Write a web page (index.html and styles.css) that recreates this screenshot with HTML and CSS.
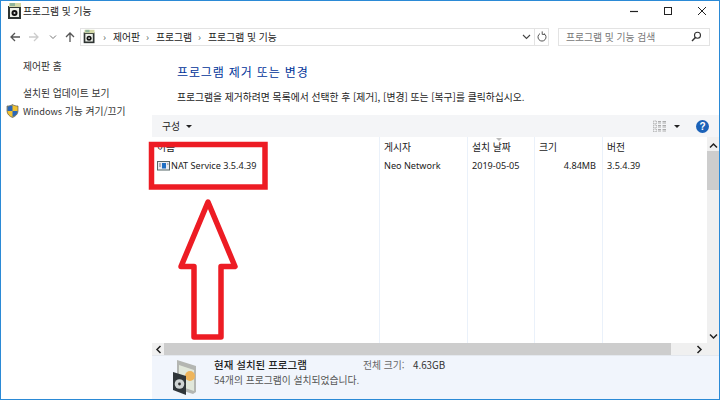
FILE: index.html
```html
<!DOCTYPE html>
<html lang="ko">
<head>
<meta charset="utf-8">
<title>프로그램 및 기능</title>
<link rel="stylesheet" href="styles.css">
</head>
<body>
<div class="window">
  <header class="titlebar">
    <svg class="cp-icon" width="18" height="18" viewBox="0 0 18 18"><rect x="2" y="4" width="13" height="13" fill="#2f3533"/><rect x="3" y="1" width="12" height="4" fill="#d5d9a8"/><rect x="4" y="1" width="5" height="3" fill="#8fb39a"/><rect x="4" y="6" width="9" height="9" fill="#eef1ea"/><circle cx="8.500" cy="11" r="3" fill="#111"/><circle cx="8.500" cy="11" r="1" fill="#ddd"/></svg>
    <span class="title-text">프로그램 및 기능</span>
    <div class="win-controls">
      <svg width="10" height="10" viewBox="0 0 10 10"><path d="M1 5.500h8" stroke="#222" stroke-width="1.200"/></svg>
      <svg width="10" height="10" viewBox="0 0 10 10"><rect x="1.500" y="1.500" width="7" height="7" fill="none" stroke="#222" stroke-width="1"/></svg>
      <svg width="10" height="10" viewBox="0 0 10 10"><path d="M1 1l8 8M9 1l-8 8" stroke="#222" stroke-width="1"/></svg>
    </div>
  </header>
  <nav class="addressrow">
    <svg class="nav-icon" width="12" height="12" viewBox="0 0 12 12"><path d="M11 6H2M6 2L2 6l4 4" fill="none" stroke="#555" stroke-width="1.300"/></svg>
    <svg class="nav-icon" width="12" height="12" viewBox="0 0 12 12"><path d="M1 6h9M6 2l4 4-4 4" fill="none" stroke="#ccc" stroke-width="1.300"/></svg>
    <svg class="nav-small" width="8" height="8" viewBox="0 0 8 8"><path d="M1 2.500l3 3 3-3" fill="none" stroke="#777" stroke-width="1"/></svg>
    <svg class="nav-icon" width="12" height="12" viewBox="0 0 12 12"><path d="M6 11V2M2 6l4-4 4 4" fill="none" stroke="#555" stroke-width="1.300"/></svg>
    <div class="addressbox">
      <svg class="cp-icon" width="15" height="15" viewBox="0 0 18 18"><rect x="2" y="4" width="13" height="13" fill="#2f3533"/><rect x="3" y="1" width="12" height="4" fill="#d5d9a8"/><rect x="4" y="1" width="5" height="3" fill="#8fb39a"/><rect x="4" y="6" width="9" height="9" fill="#eef1ea"/><circle cx="8.500" cy="11" r="3" fill="#111"/><circle cx="8.500" cy="11" r="1" fill="#ddd"/></svg>
      <span class="crumb-sep">›</span><span>제어판</span>
      <span class="crumb-sep">›</span><span>프로그램</span>
      <span class="crumb-sep">›</span><span>프로그램 및 기능</span>
      <svg class="addr-chev" width="9" height="8" viewBox="0 0 9 8"><path d="M1 2l3.500 3.500L8 2" fill="none" stroke="#444" stroke-width="1.100"/></svg>
      <span class="addr-refresh"><svg width="10" height="11" viewBox="0 0 10 11"><path d="M3 2.600a4 4 0 1 0 4 0M5.200 0.400v3H8" fill="none" stroke="#555" stroke-width="1"/></svg></span>
    </div>
    <div class="searchbox">
      <span>프로그램 및 기능 검색</span>
      <svg width="11" height="11" viewBox="0 0 11 11"><circle cx="6.500" cy="4.200" r="3" fill="none" stroke="#333" stroke-width="1.100"/><path d="M4.400 6.400L1 10" stroke="#333" stroke-width="1.400"/></svg>
    </div>
  </nav>
  <div class="body">
    <aside class="sidebar">
      <a class="side-home">제어판 홈</a>
      <a class="side-link">설치된 업데이트 보기</a>
      <a class="side-link side-shield">
        <svg class="shield" width="13" height="14" viewBox="0 0 13 14"><path d="M6.500 0.500C5 1.600 3 2 1 2v5c0 3 2.500 5.500 5.500 6.500C9.500 12.500 12 10 12 7V2c-2 0-4-.4-5.500-1.500z" fill="#f1c232" stroke="#444" stroke-width=".6"/><path d="M6.500 1C5 2 3 2.400 1.400 2.400V7H6.500zM6.500 7v6C9.500 12 11.600 10 11.600 7z" fill="#2a66b8"/></svg>
        <span class="win-latin">Windows</span> 기능 켜기/끄기
      </a>
    </aside>
    <main class="content">
      <h1 class="heading">프로그램 제거 또는 변경</h1>
      <p class="intro">프로그램을 제거하려면 목록에서 선택한 후 [제거], [변경] 또는 [복구]를 클릭하십시오.</p>
      <div class="toolbar">
        <span class="organize">구성</span><span class="caret"></span>
        <span class="tool-right">
          <svg width="14" height="12" viewBox="0 0 14 12"><path d="M0.500 1h3v2.500h-3zM0.500 5h3v2.500h-3zM0.500 9h3v2.500h-3z" fill="none" stroke="#999" stroke-width=".8" stroke-dasharray="1 .6"/><path d="M5 1.500h3M5 3h3M5 5.500h3M5 7h3M5 9.500h3M5 11h3M9.500 1.500h3.500M9.500 3h3.500M9.500 5.500h3.500M9.500 7h3.500M9.500 9.500h3.500M9.500 11h3.500" stroke="#999" stroke-width=".8"/></svg>
          <span class="caret caret-view"></span>
          <span class="help">?</span>
        </span>
      </div>
      <div class="listarea">
        <div class="list">
          <div class="row header-row">
            <span class="col c-name">이름</span>
            <span class="col c-pub">게시자</span>
            <span class="col c-date">설치 날짜<i class="sort"></i></span>
            <span class="col c-size">크기</span>
            <span class="col c-ver">버전</span>
          </div>
          <div class="row item-row">
            <span class="col c-name"><svg class="app-icon" width="13" height="11" viewBox="0 0 13 11"><rect x=".5" y="1.500" width="12" height="8.500" fill="#e8edf2" stroke="#566"/><rect x="5" y="3" width="4" height="5.500" fill="#1e6fc4"/><path d="M2 4h2M2 6h2M10 4h1.500" stroke="#778"/></svg>NAT Service 3.5.4.39</span>
            <span class="col c-pub">Neo Network</span>
            <span class="col c-date">2019-05-05</span>
            <span class="col c-size num">4.84MB</span>
            <span class="col c-ver">3.5.4.39</span>
          </div>
          <div class="col-lines"><i class="l1"></i><i class="l2"></i><i class="l3"></i><i class="l4"></i></div>
        </div>
        <div class="vscroll">
          <svg width="9" height="8" viewBox="0 0 9 8"><path d="M1 5.500L4.500 2 8 5.500" fill="none" stroke="#222" stroke-width="1.500"/></svg>
          <span class="vthumb"></span>
          <svg class="vdown" width="9" height="8" viewBox="0 0 9 8"><path d="M1 2.500L4.500 6 8 2.500" fill="none" stroke="#222" stroke-width="1.500"/></svg>
        </div>
      </div>
      <div class="hscroll">
        <svg class="h-btn" width="8" height="9" viewBox="0 0 8 9"><path d="M5.500 1L2 4.500 5.500 8" fill="none" stroke="#222" stroke-width="1.500"/></svg>
        <span class="hthumb"></span>
        <svg class="h-right" width="8" height="9" viewBox="0 0 8 9"><path d="M2.500 1L6 4.500 2.500 8" fill="none" stroke="#222" stroke-width="1.500"/></svg>
      </div>
    </main>
  </div>
  <footer class="status">
    <svg class="status-icon" width="24" height="36" viewBox="0 0 24 36"><path d="M4 1l19 6v26l-3 2L4 30z" fill="#b4b6b2"/><path d="M6 6l15 5v21L6 27z" fill="#e1e7da"/><circle cx="17" cy="17" r="5" fill="#eeb45a"/><path d="M0 13l13 4v19L0 31z" fill="#30363a"/><circle cx="6.500" cy="25" r="4.800" fill="#cfd4d4"/><circle cx="6.500" cy="25" r="1.400" fill="#333"/></svg>
    <div class="status-text">
      <div class="status-top"><strong>현재 설치된 프로그램</strong><span class="total">전체 크기:</span><span class="total-val">4.63GB</span></div>
      <div class="status-sub">54개의 프로그램이 설치되었습니다.</div>
    </div>
  </footer>
  <svg class="annotation" width="720" height="400" viewBox="0 0 720 400">
    <rect x="151.500" y="144.500" width="113.500" height="42.500" fill="none" stroke="#ed1c24" stroke-width="5.500"/>
    <path d="M208 202L235 266.500H221V337H194V266.500H181Z" fill="none" stroke="#ed1c24" stroke-width="5.500" stroke-linejoin="round"/>
  </svg>
</div>
</body>
</html>
```
FILE: styles.css
```css
* { box-sizing: border-box; }
html, body { margin: 0; padding: 0; }
body { width: 720px; height: 400px; overflow: hidden; background: #fff; font-family: "Noto Sans CJK KR", "Noto Sans", sans-serif; font-size: 9.800px; color: #222; }
.window { position: relative; width: 720px; height: 400px; border: 1px solid #2b8ad6; display: flex; flex-direction: column; background: #fff; }
.titlebar { height: 20px; display: flex; align-items: center; padding-left: 5px; flex: none; }
.title-text { margin-left: -1px; padding-left: 0; }
.cp-icon { flex: none; }
.win-controls { margin-left: auto; display: flex; gap: 24px; padding-right: 12px; }
.addressrow { height: 25px; flex: none; display: flex; align-items: center; padding-left: 8px; margin-top: 3px; }
.nav-icon { margin-right: 7px; flex: none; }
.nav-small { margin-right: 7px; margin-left: 2px; flex: none; }
.addressbox { width: 469px; height: 18px; margin-left: -3px; border: 1px solid #e3e3e3; display: flex; align-items: center; padding-left: 1px; position: relative; gap: 4px; }
.crumb-sep { color: #555; margin-left: 2px; width: 6px; }
.addr-chev { margin-left: auto; margin-right: 3px; }
.addr-refresh { width: 14px; height: 16px; border-left: 1px solid #e3e3e3; display: flex; align-items: center; justify-content: center; margin-left: -4px; }
.searchbox { width: 152px; height: 18px; margin-left: 9px; border: 1px solid #e3e3e3; display: flex; align-items: center; justify-content: space-between; padding: 0 7px; color: #777; }
.body { flex: 1; display: flex; min-height: 0; }
.sidebar { width: 151px; flex: none; display: flex; flex-direction: column; padding: 10px 0 0 22px; color: #333; }
.sidebar a { display: block; height: 16px; line-height: 14px; }
.side-home { margin-bottom: 11px; }
.win-latin { font-size: 9.200px; }
.side-shield { position: relative; margin-top: 2px; }
.shield { position: absolute; left: -17px; top: 0; }
.content { flex: 1; min-width: 0; display: flex; flex-direction: column; }
.heading { margin: 14px 0 0 25px; font-size: 12px; font-weight: 400; color: #003399; line-height: 18px; letter-spacing: .85px; }
.intro { margin: 9px 0 0 25px; line-height: 14px; color: #222; }
.toolbar { margin-top: 11px; height: 22px; background: #f4f5f7; display: flex; align-items: center; padding-left: 10px; flex: none; }
.caret { width: 0; height: 0; border: 3px solid transparent; border-top: 3.500px solid #222; border-bottom: 0; margin-left: 6px; display: inline-block; }
.tool-right { margin-left: auto; display: flex; align-items: center; padding-right: 10px; }
.caret-view { margin: 0 16px 0 7px; }
.help { width: 13px; height: 13px; border-radius: 50%; background: #1b62b8; color: #fff; font: 700 10px/13px "Liberation Sans", sans-serif; text-align: center; }
.listarea { flex: 1; min-height: 0; display: flex; }
.list { flex: 1; position: relative; }
.row { display: flex; height: 19px; align-items: center; }
.header-row { height: 19px; }
.item-row { height: 19px; }
.col { display: block; padding-left: 5px; white-space: nowrap; position: relative; }
.c-name { width: 227px; display: flex; align-items: center; padding-left: 5px; }
.item-row .col { font-size: 9.100px; font-family: "Noto Sans", "Noto Sans CJK KR", sans-serif; }
.app-icon { margin-right: 1px; }
.c-pub { width: 88px; }
.c-date { width: 67px; }
.c-size { width: 68px; }
.num { text-align: right; padding-right: 6px; }
.c-ver { width: 105px; }
.sort { position: absolute; left: 29px; top: -2px; width: 6px; height: 3px; border-left: 3px solid transparent; border-right: 3px solid transparent; border-top: 3px solid #bbb; }
.col-lines i { position: absolute; top: 0; bottom: 0; width: 1px; background: #eaf1fa; }
.col-lines .l1 { left: 227px; }
.col-lines .l2 { left: 315px; }
.col-lines .l3 { left: 382px; }
.col-lines .l4 { left: 450px; }
.vscroll { width: 12px; flex: none; background: #f0f0f0; display: flex; flex-direction: column; align-items: center; padding-top: 5px; }
.vthumb { width: 100%; height: 39px; background: #cdcdcd; margin-top: 1px; }
.vdown { margin-top: auto; margin-bottom: 3px; }
.hscroll { height: 13px; flex: none; background: #f0f0f0; display: flex; align-items: center; border-bottom: 1px solid #e4e8ee; }
.h-btn { width: 12px; padding-left: 2px; flex: none; }
.hthumb { width: 507px; height: 12px; background: #cdcdcd; }
.h-right { margin-left: auto; margin-right: 16px; }
.status { height: 43px; flex: none; margin-left: 151px; background: #f1f5fc; display: flex; align-items: flex-start; padding: 3px 0 0 21px; }
.status-text { margin-left: 17px; line-height: 14px; }
.status-top { display: flex; margin-top: -1px; }
.status-top strong { font-weight: 500; width: 149px; color: #222; font-size: 10.500px; }
.total { color: #666; width: 50px; }
.total-val { color: #333; }
.status-sub { color: #555; margin-top: 1px; }
.annotation { position: absolute; left: -1px; top: -1px; pointer-events: none; }
```
